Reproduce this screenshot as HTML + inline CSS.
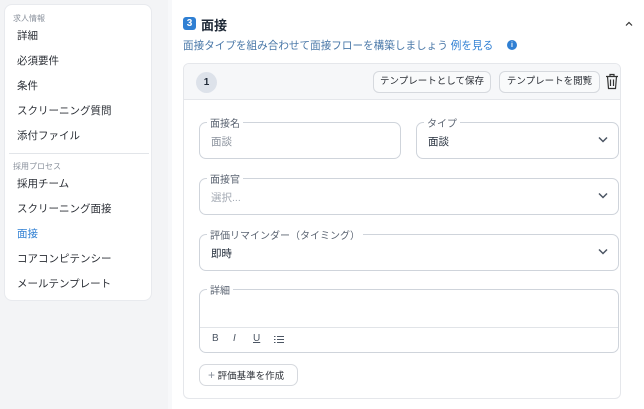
<!DOCTYPE html>
<html><head><meta charset="utf-8"><style>
*{box-sizing:border-box;margin:0;padding:0}
body{width:644px;height:409px;overflow:hidden;background:#f3f4f6;font-family:"Liberation Sans","Noto Sans CJK JP",sans-serif;color:#1f2937;position:relative}
.side{position:absolute;left:4px;top:4px;width:148px;height:297px;background:#fff;border-radius:8px;border:1px solid #e8eaee}
.grp{position:absolute;left:8px;font-size:8px;color:#8a919c}
.it{position:absolute;left:12px;font-size:10.5px;color:#2b2f36}
.main{position:absolute;left:168px;top:0;width:476px;height:409px;background:#fff;border-left:4px solid #f7f8fa}
.abs{position:absolute}
.card{position:absolute;left:183px;top:63px;width:438px;height:336px;border:1px solid #e5e7eb;border-radius:6px;background:#fff;overflow:hidden}
.hd{position:absolute;left:0;top:0;width:100%;height:36px;background:#f6f7f9;border-bottom:1px solid #e5e7eb}
.btn{position:absolute;top:7px;height:22px;border:1px solid #d6d9de;border-radius:6px;background:#f9fafb;font-size:9.5px;color:#2b2f36;line-height:20px;text-align:center}
.fld{position:absolute;border:1px solid #cfd4db;border-radius:7px;background:#fff}
.lab{position:absolute;top:-8px;left:7px;background:#fff;padding:0 3px;font-size:10px;color:#5b6472}
.val{position:absolute;left:11px;top:11px;font-size:10.5px}
.chev{position:absolute;right:10px;top:13px}
.ctr{display:flex;align-items:center;justify-content:center}
</style></head><body>
<div class="side">
<div class="grp" style="top:8px">求人情報</div>
<div class="it" style="top:23px">詳細</div>
<div class="it" style="top:48px">必須要件</div>
<div class="it" style="top:73px">条件</div>
<div class="it" style="top:98px">スクリーニング質問</div>
<div class="it" style="top:123px">添付ファイル</div>
<div class="abs" style="left:4px;top:148px;width:140px;height:1px;background:#e2e5e9"></div>
<div class="grp" style="top:156px">採用プロセス</div>
<div class="it" style="top:171px">採用チーム</div>
<div class="it" style="top:196px">スクリーニング面接</div>
<div class="it" style="top:221px;color:#2f7fd3">面接</div>
<div class="it" style="top:246px">コアコンピテンシー</div>
<div class="it" style="top:271px">メールテンプレート</div>
</div>
<div class="main"></div>
<div class="abs ctr" style="left:183px;top:17px;width:13px;height:13px;background:#2f7fd3;border-radius:3px;color:#fff;font-size:10px;font-weight:bold">3</div>
<div class="abs" style="left:201px;top:15px;font-size:13px;font-weight:bold;color:#1f2937">面接</div>
<svg class="abs" style="left:625px;top:21px" width="8" height="6"><path d="M1 4.5 L4 1.5 L7 4.5" stroke="#333" stroke-width="1.2" fill="none"/></svg>
<div class="abs" style="left:183px;top:38px;font-size:10.6px;color:#4a78a8;white-space:nowrap">面接タイプを組み合わせて面接フローを構築しましょう <span style="color:#2f7fd3">例を見る</span></div>
<div class="abs ctr" style="left:507px;top:40px;width:10px;height:10px;border-radius:50%;background:#2f7fd3;color:#fff;font-size:7px;font-weight:bold">i</div>
<div class="card">
<div class="hd">
<div class="abs ctr" style="left:12px;top:8px;width:21px;height:21px;border-radius:50%;background:#dde2ea;font-size:10px;font-weight:bold">1</div>
<div class="btn" style="left:189px;width:118px">テンプレートとして保存</div>
<div class="btn" style="left:315px;width:101px">テンプレートを閲覧</div>
<svg class="abs" style="left:421px;top:9px" width="14" height="17" viewBox="0 0 14 17"><path d="M1 3.5H13M5 3.5V1.5H9V3.5M2.5 3.5L3.5 15.5H10.5L11.5 3.5M5.5 6.5V13M8.5 6.5V13" stroke="#333" stroke-width="1.2" fill="none"/></svg>
</div>
</div>
<div class="fld" style="left:199px;top:122px;width:202px;height:37px"><div class="lab">面接名</div><div class="val" style="color:#8a919c">面談</div></div>
<div class="fld" style="left:416px;top:122px;width:203px;height:37px"><div class="lab">タイプ</div><div class="val">面談</div><svg class="chev" width="10" height="7"><path d="M1 1.5L5 5.5L9 1.5" stroke="#4b5563" stroke-width="1.5" fill="none"/></svg></div>
<div class="fld" style="left:199px;top:178px;width:420px;height:37px"><div class="lab">面接官</div><div class="val" style="color:#a3a9b3">選択...</div><svg class="chev" width="10" height="7"><path d="M1 1.5L5 5.5L9 1.5" stroke="#4b5563" stroke-width="1.5" fill="none"/></svg></div>
<div class="fld" style="left:199px;top:234px;width:420px;height:37px"><div class="lab">評価リマインダー（タイミング）</div><div class="val">即時</div><svg class="chev" width="10" height="7"><path d="M1 1.5L5 5.5L9 1.5" stroke="#4b5563" stroke-width="1.5" fill="none"/></svg></div>
<div class="fld" style="left:199px;top:289px;width:420px;height:64px"><div class="lab">詳細</div>
<div class="abs" style="left:0;top:37px;width:100%;height:1px;background:#e1e4e8"></div>
<div class="abs" style="left:12px;top:43px;font-size:10px;color:#4b5563">B</div>
<div class="abs" style="left:33px;top:43px;font-size:10px;color:#4b5563;font-style:italic">I</div>
<div class="abs" style="left:53px;top:43px;font-size:10px;color:#4b5563;text-decoration:underline">U</div>
<svg class="abs" style="left:74px;top:45px" width="10" height="9"><path d="M0 1.5H1.5M3 1.5H10M0 4.5H1.5M3 4.5H10M0 7.5H1.5M3 7.5H10" stroke="#4b5563" stroke-width="1"/></svg>
</div>
<div class="abs" style="left:199px;top:364px;width:99px;height:22px;border:1px solid #d6d9de;border-radius:7px;font-size:9.5px;line-height:20px;color:#2b2f36;padding-left:8px"><span style="color:#8a919c;font-size:12px">+</span> 評価基準を作成</div>
</body></html>
